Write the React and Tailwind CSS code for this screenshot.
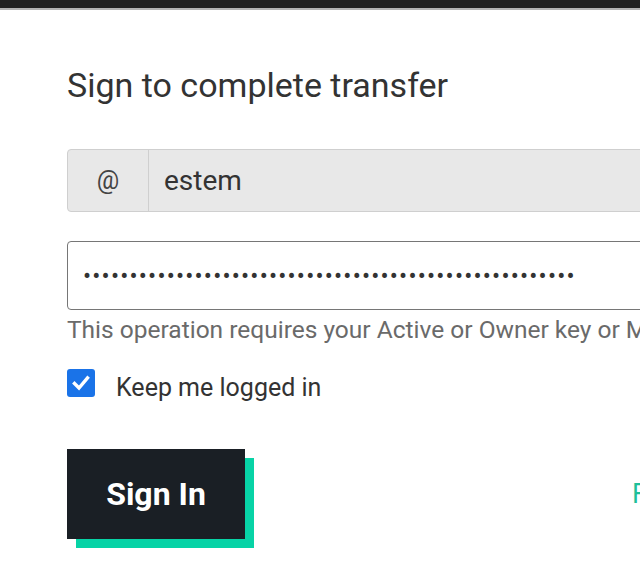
import React, { useState } from "react";

export default function App() {
  const [keep, setKeep] = useState(true);
  const dots = "•".repeat(53);

  return (
    <div className="w-[640px] h-[566px] overflow-hidden bg-white font-['Roboto',sans-serif]">
      <div className="h-[8px] bg-[#212121]" />
      <div className="h-[2px] bg-[#b3b3b3]" />

      <div className="pl-[67px] w-[1000px]">
        <h1 className="mt-[55px] text-[34px] leading-[40px] text-[#333]">
          Sign to complete transfer
        </h1>

        <div className="mt-[44px] flex h-[63px] w-[700px] rounded-[4px] border border-[#cfcfcf] bg-[#e8e8e8]">
          <div className="flex w-[81px] items-center justify-center border-r border-[#cfcfcf] text-[25px] text-[#444]">
            @
          </div>
          <div className="flex items-center pl-[15px] text-[28px] text-[#333]">
            estem
          </div>
        </div>

        <div className="mt-[29px] flex h-[69px] w-[700px] items-center rounded-[4px] border border-[#767676] bg-white pl-[15px] text-[24px] tracking-[1.2px] text-[#333]">
          {dots}
        </div>

        <p className="mt-[4px] whitespace-nowrap text-[24.5px] leading-[32px] text-[#6a6a6a]">
          This operation requires your Active or Owner key or Master password.
        </p>

        <label className="mt-[23px] flex items-start gap-[21px]">
          <button
            type="button"
            onClick={() => setKeep(!keep)}
            className="flex h-[28px] w-[28px] shrink-0 items-center justify-center rounded-[3px] bg-[#1a73e8]"
          >
            {keep && (
              <svg width="20" height="20" viewBox="0 0 20 20" fill="none">
                <path d="M3.5 10.5l4.5 4.5 8.5-10" stroke="white" strokeWidth="3.4" strokeLinecap="square" />
              </svg>
            )}
          </button>
          <span className="mt-[-1px] text-[25px] leading-[40px] text-[#333]">Keep me logged in</span>
        </label>

        <div className="mt-[41px] flex items-center">
          <button className="h-[90px] w-[178px] bg-[#1a1f25] text-[32px] font-bold text-white shadow-[9px_9px_0_#07d3a6]">
            Sign In
          </button>
          <span className="ml-[387px] text-[27px] text-[#1fbf9a]">Forgot password?</span>
        </div>
      </div>
    </div>
  );
}
